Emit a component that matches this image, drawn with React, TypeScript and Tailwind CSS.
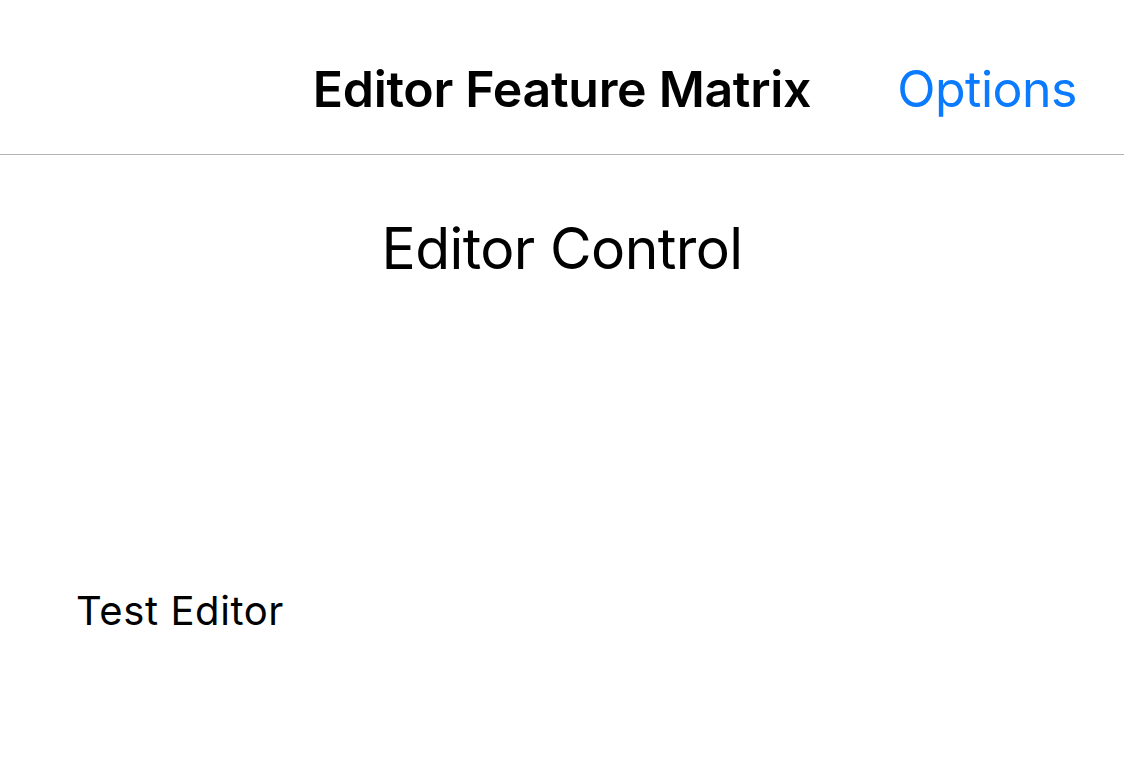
import React from "react";

export default function App() {
  return (
    <div
      className="w-[1124px] h-[776px] bg-white text-black overflow-hidden"
      style={{ fontFamily: "Inter, 'Noto Sans', sans-serif" }}
    >
      <header className="h-[155px] border-b border-[#b3b3b3] grid grid-cols-[1fr_auto_1fr] items-center pt-[24px]">
        <div />
        <h1 className="text-[50px] font-semibold tracking-[-0.3px] leading-none">Editor Feature Matrix</h1>
        <button className="justify-self-end mr-[47px] text-[50px] text-[#0a7aff] leading-none tracking-[-0.5px]">
          Options
        </button>
      </header>
      <main className="flex flex-col">
        <h2 className="mt-[65px] text-center text-[57px] leading-none tracking-[-0.6px]">Editor Control</h2>
        <p className="mt-[314px] ml-[76px] text-[40px] leading-none tracking-[0.6px]">Test Editor</p>
      </main>
    </div>
  );
}
